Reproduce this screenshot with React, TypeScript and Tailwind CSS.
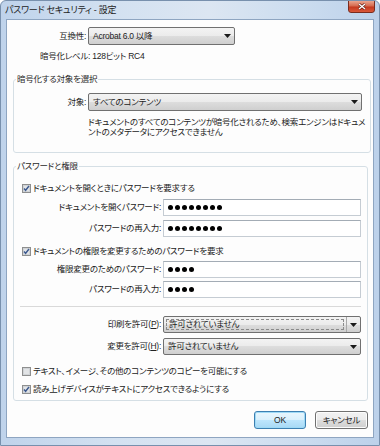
import React from 'react';

const font = "font-['Liberation_Sans','Noto_Sans_CJK_JP',sans-serif] [font-feature-settings:'palt']";

const Arrow = () => (
  <svg width="7" height="4" viewBox="0 0 7 4" className="shrink-0">
    <path d="M0 0h7L3.5 4z" fill="#1a1a1a" />
  </svg>
);

const Combo: React.FC<{ value: string; width: string; focused?: boolean; height?: string }> = ({ value, width, focused, height = 'h-[17px]' }) => (
  <div className={`${width} ${height} flex items-stretch border border-[#707070] rounded-[2px] bg-[linear-gradient(#f3f3f3,#ebebeb_50%,#dddddd_50%,#cfcfcf)]`}>
    {focused ? (
      <div className="flex-1 m-[2px] border border-dashed border-[#8a8a8a] flex items-center pl-[2px] text-[#222]">{value}</div>
    ) : (
      <div className="flex-1 flex items-center pl-[4px] text-[#222]">{value}</div>
    )}
    {focused && <div className="w-px bg-[#a8a8a8]" />}
    <div className="w-[13px] flex items-center justify-center">
      <Arrow />
    </div>
  </div>
);

const Dots: React.FC<{ n: number }> = ({ n }) => (
  <div className="w-[198px] h-[17px] bg-white border border-[#c5ccd3] border-t-[#a3acb5] flex items-center gap-[2px] pl-[4px]">
    {Array.from({ length: n }).map((_, i) => (
      <span key={i} className="w-[5px] h-[5px] rounded-full bg-black" />
    ))}
  </div>
);

const Check: React.FC<{ checked?: boolean; label: string }> = ({ checked, label }) => (
  <div className="flex items-center h-[12px] pl-[8px] gap-[2px]">
    <svg width="9" height="9" viewBox="0 0 9 9" className="shrink-0">
      <rect x="0.5" y="0.5" width="8" height="8" fill="#f4f4f4" stroke="#8e8f8f" />
      <rect x="1.5" y="1.5" width="6" height="6" fill="#e2e4e6" stroke="#d0d3d6" />
      {checked && <path d="M2 4.5l1.6 1.8L7 2" fill="none" stroke="#3d5a8f" strokeWidth="1.4" />}
    </svg>
    <span className="leading-[12px] whitespace-nowrap text-[#222]">{label}</span>
  </div>
);

const PwRow: React.FC<{ label: string; n: number; className?: string }> = ({ label, n, className }) => (
  <div className={`flex items-center ${className}`}>
    <div className="w-[149px] pr-[2px] text-right whitespace-nowrap text-[#222]">{label}</div>
    <Dots n={n} />
  </div>
);

export default function App() {
  return (
    <div className={`w-[380px] h-[446px] flex flex-col border border-[#7890ad] rounded-t-[6px] overflow-hidden bg-[linear-gradient(90deg,#bfd3eb,#d3e1f1_30%,#dce6f2_55%,#cbdcef_80%,#bcd1ea)] text-[8.5px] tracking-[-0.25px] ${font}`}>
      {/* title bar */}
      <div className="h-[18px] flex items-start justify-between pl-[4px] pr-[4px]">
        <span className="pt-[3px] text-[9px] leading-[12px] text-[#1c1c1c]">パスワード セキュリティ - 設定</span>
        <div className="w-[27px] h-[13px] mt-[-1px] rounded-b-[3px] border border-[#7a2c1e] bg-[linear-gradient(#eaa58f,#d56a4f_45%,#c5391f_55%,#d9583a)] flex items-center justify-center">
          <svg width="8" height="7" viewBox="0 0 8 7">
            <path d="M1 1l6 5M7 1L1 6" stroke="#5a1a10" strokeWidth="2.6" />
            <path d="M1 1l6 5M7 1L1 6" stroke="#fff" strokeWidth="1.4" />
          </svg>
        </div>
      </div>

      {/* client */}
      <div className="flex-1 pl-[5px] pr-[5px] pb-[7px]">
        <div className="h-full bg-[#fdfdfd] border border-[#8ea5c1] flex flex-col pl-[6px] pr-[5px]">
          <div className="flex items-center mt-[7px]">
            <div className="w-[75px] pr-[2px] text-right text-[#222]">互換性:</div>
            <Combo value="Acrobat 6.0 以降" width="w-[147px]" height="h-[18px]" />
          </div>
          <div className="mt-[5px] h-[12px] leading-[12px] pl-[27px] text-[#222]">暗号化レベル: 128ビット RC4</div>

          <fieldset className="mt-[11px] border border-[#d5dfe5] rounded-[3px] pb-[15px] pr-[5px]">
            <legend className="ml-[2px] px-[1px] leading-[12px] text-[#2a2a2a]">暗号化する対象を選択</legend>
            <div className="flex items-center mt-[8px]">
              <div className="w-[74px] pr-[2px] text-right text-[#222]">対象:</div>
              <Combo value="すべてのコンテンツ" width="w-[274px]" height="h-[18px]" />
            </div>
            <div className="mt-[6px] pl-[74px] leading-[10px] text-[#222] whitespace-nowrap">
              <div>ドキュメントのすべてのコンテンツが暗号化されるため、検索エンジンはドキュメ</div>
              <div>ントのメタデータにアクセスできません</div>
            </div>
          </fieldset>

          <fieldset className="mt-[7px] border border-[#d5dfe5] rounded-[3px] pb-[5px]">
            <legend className="ml-[2px] px-[1px] leading-[12px] text-[#2a2a2a]">パスワードと権限</legend>
            <div className="mt-[10px]">
              <Check checked label="ドキュメントを開くときにパスワードを要求する" />
            </div>
            <PwRow label="ドキュメントを開くパスワード:" n={8} className="mt-[5px]" />
            <PwRow label="パスワードの再入力:" n={8} className="mt-[4px]" />
            <div className="mt-[8px]">
              <Check checked label="ドキュメントの権限を変更するためのパスワードを要求" />
            </div>
            <PwRow label="権限変更のためのパスワード:" n={4} className="mt-[4px]" />
            <PwRow label="パスワードの再入力:" n={4} className="mt-[3px]" />

            <div className="mt-[8px] mx-[6px] h-px bg-[#d9d9d9]" />

            <div className="flex items-center mt-[9px]">
              <div className="w-[149px] pr-[2px] text-right whitespace-nowrap text-[#222]">
                印刷を許可(<span className="underline">P</span>):
              </div>
              <Combo value="許可されていません" width="w-[198px]" focused />
            </div>
            <div className="flex items-center mt-[5px]">
              <div className="w-[149px] pr-[2px] text-right whitespace-nowrap text-[#222]">
                変更を許可(<span className="underline">H</span>):
              </div>
              <Combo value="許可されていません" width="w-[198px]" />
            </div>

            <div className="mt-[10px]">
              <Check label="テキスト、イメージ、その他のコンテンツのコピーを可能にする" />
            </div>
            <div className="mt-[6px]">
              <Check checked label="読み上げデバイスがテキストにアクセスできるようにする" />
            </div>
          </fieldset>

          <div className="mt-[10px] flex justify-end gap-[9px]">
            <button className="w-[52px] h-[18px] rounded-[3px] border border-[#3c7fb1] bg-[linear-gradient(#eaf6fd,#d9f0fc_50%,#bee6fd_50%,#a7d9f5)] text-[#222] shadow-[inset_0_0_0_1px_#9fdaf6]">
              OK
            </button>
            <button className="w-[53px] h-[18px] rounded-[3px] border border-[#707070] bg-[linear-gradient(#f2f2f2,#ebebeb_50%,#dddddd_50%,#cfcfcf)] text-[#222] shadow-[inset_0_0_0_1px_#fcfcfc]">
              キャンセル
            </button>
          </div>
        </div>
      </div>
    </div>
  );
}
